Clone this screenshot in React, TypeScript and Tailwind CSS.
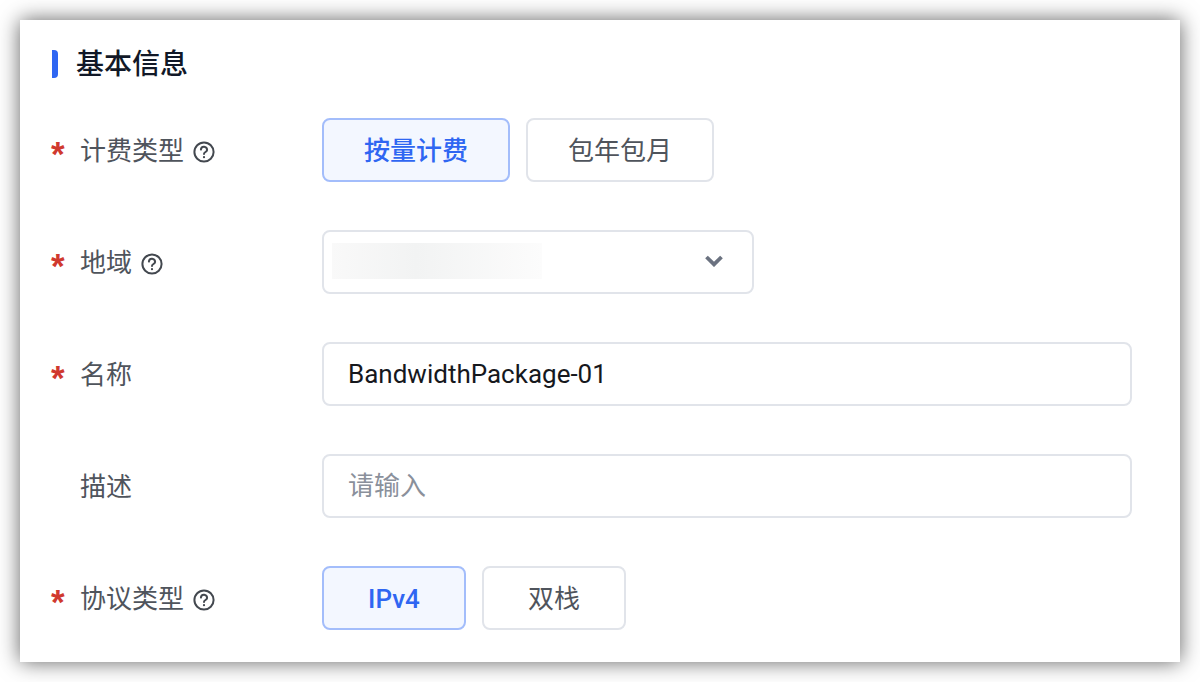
const font = "font-['Roboto','Noto_Sans_CJK_SC',sans-serif]";

const HelpIcon = () => (
  <svg width="22" height="22" viewBox="0 0 22 22" fill="none" stroke="#43484f" strokeWidth="2" strokeLinecap="round" strokeLinejoin="round">
    <circle cx="11" cy="11" r="9.6" />
    <path d="M7.9 8.6a3.1 3.1 0 0 1 6.2 0.4c0 1.9-3.1 2.1-3.1 3.900" />
    <circle cx="11" cy="16.2" r="0.5" fill="#43484f" strokeWidth="1.2" />
  </svg>
);

const Label = ({ text, required, help }: { text: string; required?: boolean; help?: boolean }) => (
  <div className="w-[270px] shrink-0 h-16 flex items-center">
    <span className="w-[28px] shrink-0 text-[#d0392e] text-[35px] leading-none font-['Liberation_Sans'] font-bold pt-[6px] -ml-px pr-px box-content">
      {required ? "*" : ""}
    </span>
    <span className="text-[26px] text-[#4f545c] pt-0.5">{text}</span>
    {help && (
      <span className="ml-[9px] mt-[3px] flex">
        <HelpIcon />
      </span>
    )}
  </div>
);

const Option = ({ text, active, w }: { text: string; active?: boolean; w: string }) => (
  <div
    className={`${w} h-16 rounded-lg border-2 flex items-center justify-center text-[26px] pt-0.5 ${
      active
        ? "border-[#a3bdfb] bg-[#f3f7ff] text-[#2f66f2] font-medium"
        : "border-[#e1e4ea] bg-white text-[#4f545c]"
    }`}
  >
    {text}
  </div>
);

export default function App() {
  return (
    <div className={`${font} w-[1200px] h-[682px] bg-white p-5 overflow-hidden`}>
      <div className="h-[642px] bg-white px-8 pt-[30px] shadow-[0_0_20px_rgba(0,0,0,0.62)]">
        <div className="flex items-center h-7 mb-10">
          <span className="w-1.5 h-7 bg-[#2f66f2] rounded-r-[4px]" />
          <h2 className="ml-[18px] pt-0.5 text-[28px] font-medium text-[#111827] leading-none">基本信息</h2>
        </div>

        <div className="flex flex-col gap-12 w-full">
          <div className="flex">
            <Label text="计费类型" required help />
            <div className="flex gap-4">
              <Option text="按量计费" active w="w-[188px]" />
              <Option text="包年包月" w="w-[188px]" />
            </div>
          </div>

          <div className="flex">
            <Label text="地域" required help />
            <div className="w-[432px] h-16 rounded-lg border-2 border-[#e1e4ea] flex items-center justify-between pl-2 pr-[29px]">
              <div className="w-[210px] h-9 mb-0.5 bg-gradient-to-r from-[#f9f9f9] via-[#f2f3f3] via-40% to-[#fcfcfc]" />
              <svg width="18" height="12" viewBox="0 0 18 12" fill="none" stroke="#6b7280" strokeWidth="3.8" className="mb-0.5">
                <path d="M1.5 2 9 9.4 16.500 2" />
              </svg>
            </div>
          </div>

          <div className="flex">
            <Label text="名称" required />
            <div className="w-[810px] h-16 rounded-lg border-2 border-[#e1e4ea] flex items-center px-6 text-[26px] text-[#16181d]">
              BandwidthPackage-01
            </div>
          </div>

          <div className="flex">
            <Label text="描述" />
            <div className="w-[810px] h-16 rounded-lg border-2 border-[#e1e4ea] flex items-center px-6 text-[26px] text-[#8a909b]">
              请输入
            </div>
          </div>

          <div className="flex">
            <Label text="协议类型" required help />
            <div className="flex gap-4">
              <Option text="IPv4" active w="w-[144px]" />
              <Option text="双栈" w="w-[144px]" />
            </div>
          </div>
        </div>
      </div>
    </div>
  );
}
